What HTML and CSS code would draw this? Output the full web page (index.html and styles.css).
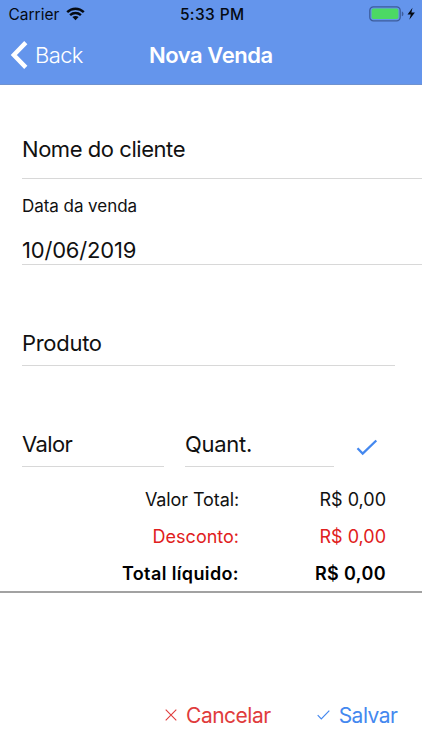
FILE: index.html
```html
<!DOCTYPE html>
<html lang="pt-BR">
<head>
<meta charset="utf-8">
<meta name="viewport" content="width=device-width, initial-scale=1">
<title>Nova Venda</title>
<link rel="stylesheet" href="styles.css">
</head>
<body>
<div class="screen">
  <header class="header">
    <div class="status">
      <div class="carrier"><span class="carrier-name">Carrier</span>
        <svg class="wifi" width="19" height="14" viewBox="0 0 19 14" fill="none" stroke="#050a12" stroke-width="2.4"><path d="M1.2 5.2C5.9.6 13.1.6 17.8 5.2M4.1 8.2c3.1-2.9 7.7-2.9 10.8 0"/><path d="M9.5 13.2 6.4 10.1c1.8-1.6 4.4-1.6 6.2 0z" fill="#050a12" stroke="none"/></svg>
      </div>
      <span class="time">5:33 PM</span>
      <svg class="battery" width="47" height="16" viewBox="0 0 47 16"><rect x=".8" y=".8" width="30.4" height="14" rx="3.6" fill="none" stroke="#3c5c9c" stroke-width="1.3"/><rect x="2.6" y="2.6" width="26.8" height="10.4" rx="1.8" fill="#4cd964"/><path d="M32.8 5.4c2.2.6 2.2 4.2 0 4.8z" fill="#3c5c9c"/><path d="M43.5 1.8 38.5 8.4h3.3l-1.5 5.4 5.6-7.3h-3.5z" fill="#050a12"/></svg>
    </div>
    <div class="navbar">
      <div class="back"><svg width="18" height="28" viewBox="0 0 18 28" fill="none" stroke="#fff" stroke-width="4.4"><path d="M15.8 1.6 3.8 14 15.8 26.4"/></svg><span class="back-label">Back</span></div>
      <h1 class="title">Nova Venda</h1>
    </div>
  </header>
  <main class="form">
    <div class="field client"><span class="text nome">Nome do cliente</span></div>
    <div class="field date"><span class="label">Data da venda</span><span class="text data">10/06/2019</span></div>
    <div class="field product"><span class="text produto">Produto</span></div>
    <div class="row">
      <div class="field value"><span class="text valor">Valor</span></div>
      <div class="field quantity"><span class="text quant">Quant.</span></div>
      <svg class="confirm" width="22" height="18" viewBox="0 0 22 18" fill="none" stroke="#4488ef" stroke-width="2.3"><path d="m1.5 9.3 5.2 5.3L20.3 1.5"/></svg>
    </div>
  </main>
  <section class="totals">
    <div class="total"><span class="t-name t1">Valor Total:</span><span class="t-value">R$ 0,00</span></div>
    <div class="total discount"><span class="t-name t2">Desconto:</span><span class="t-value">R$ 0,00</span></div>
    <div class="total net"><span class="t-name">Total líquido:</span><span class="t-value">R$ 0,00</span></div>
  </section>
  <footer class="actions">
    <div class="action cancel"><svg width="12" height="12" viewBox="0 0 12 12" fill="none" stroke="currentColor" stroke-width="1.1"><path d="m.7.7 10.6 10.6M11.3.7.7 11.3"/></svg><span class="cancel-label">Cancelar</span></div>
    <div class="action save"><svg width="13" height="10" viewBox="0 0 13 10" fill="none" stroke="currentColor" stroke-width="1.2"><path d="m.7 5.2 3.6 3.6L12.3.7"/></svg><span class="save-label">Salvar</span></div>
  </footer>
</div>
</body>
</html>
```
FILE: styles.css
```css
* { box-sizing: border-box; }
body { margin: 0; background: #fff; color: #111; font-family: Inter, "Liberation Sans", sans-serif; }
.screen { width: 422px; height: 750px; display: flex; flex-direction: column; overflow: hidden; }
.screen span, .title { white-space: nowrap; }
svg { display: block; flex: none; }
.header { height: 85px; background: #6495ec; border-bottom: 1px solid #6f92cf; }
.status { height: 28px; padding: 0 6px 0 8.5px; display: grid; grid-template-columns: 1fr auto 1fr; align-items: center; color: #050a12; font-size: 15.5px; }
.carrier { display: flex; align-items: center; gap: 7px; }
.wifi { margin-bottom: 1px; }
.time { font-weight: 550; font-size: 15.5px; letter-spacing: .4px; }
.battery { justify-self: end; }
.navbar { height: 54px; display: grid; grid-template-columns: 149px 1fr; align-items: center; color: #fff; }
.back { display: flex; align-items: center; gap: 7px; padding-left: 10px; font-size: 22px; font-weight: 350; letter-spacing: -.6px; }
.title { margin: 0; font-size: 22px; line-height: 28px; font-weight: 600; letter-spacing: -.45px; }
.form { height: 382px; padding-left: 22px; }
.field { display: flex; flex-direction: column; border-bottom: 1px solid #d8d8d8; }
.text { font-size: 22px; line-height: 28px; }
.nome { letter-spacing: -.45px; }
.data { letter-spacing: -.2px; }
.produto { letter-spacing: -.3px; }
.valor { letter-spacing: -.6px; }
.quant { letter-spacing: -.3px; }
.client { height: 94px; padding-top: 50px; }
.date { height: 86px; padding-top: 16px; }
.label { font-size: 17px; line-height: 22px; margin-bottom: 19px; letter-spacing: -.05px; }
.product { height: 101px; padding-top: 64px; width: 373px; }
.row { height: 101px; display: flex; align-items: flex-end; }
.value { width: 142px; height: 37px; }
.quantity { width: 149px; height: 37px; margin-left: 21px; }
.confirm { margin: 0 0 10px 22px; }
.totals { height: 126px; padding: 14px 36px 0 0; border-bottom: 2px solid #a2a2a2; }
.total { height: 37px; line-height: 37px; display: grid; grid-template-columns: 239px 1fr; text-align: right; font-size: 18px; }
.t1 { letter-spacing: -.1px; }
.discount { color: #e02020; }
.net { color: #000; font-weight: 600; letter-spacing: .38px; }
.actions { margin-top: auto; height: 70px; padding-right: 24.5px; display: flex; align-items: center; justify-content: flex-end; gap: 47px; font-size: 21px; letter-spacing: -.5px; }
.action { display: flex; align-items: center; gap: 9px; }
.cancel { color: #e03c3c; margin-right: -1px; }
.save { color: #4488ef; }
```
